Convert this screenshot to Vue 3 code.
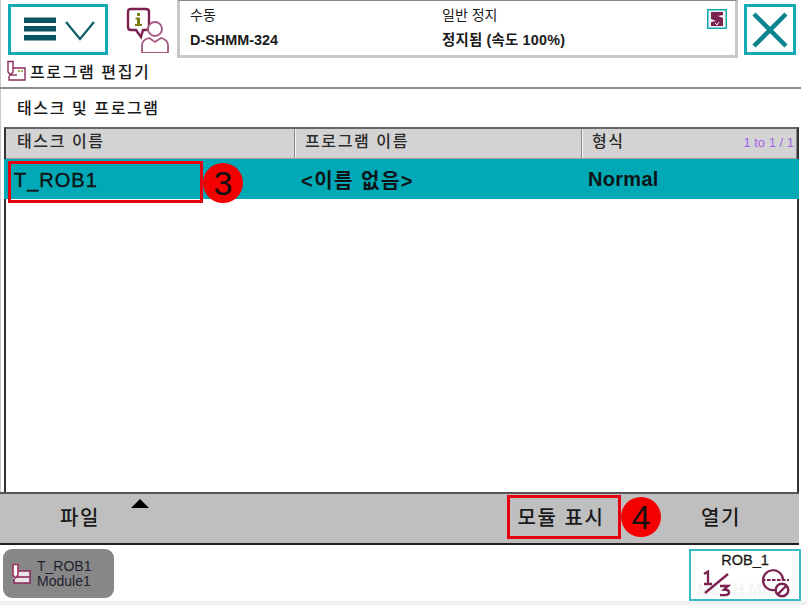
<template>
  <div class="screen">
    <header class="topbar">
      <button class="menu-btn">
        <svg width="71" height="30" viewBox="0 0 71 30">
          <rect x="0" y="2.500" width="32" height="5.500" fill="#0a5560" />
          <rect x="0" y="11" width="32" height="5.500" fill="#0a5560" />
          <rect x="0" y="20" width="32" height="5.500" fill="#0a5560" />
          <path d="M42 7 L56 24 L70 7" fill="none" stroke="#0e5f68" stroke-width="2.200" />
        </svg>
      </button>
      <svg class="info-icon" width="46" height="46" viewBox="0 0 46 46">
        <path d="M3 5 Q3 2 6 2 H21 Q24 2 24 5 V20 Q24 23 21 23 H18 L16 30 L11 23 H6 Q3 23 3 20 Z" fill="#fff" stroke="#7b2150" stroke-width="2.400" />
        <rect x="12" y="6" width="3" height="3" fill="#7d7d10" />
        <path d="M10.500 10.500 H15 V17 H17 V19 H10 V17 H12 V12.500 H10.500 Z" fill="#7d7d10" />
        <circle cx="30" cy="22" r="7" fill="#fff" stroke="#a5597f" stroke-width="1.800" />
        <path d="M17 46 V38 Q17 33 24 31 L30 35 L36 31 Q43 33 43 38 V46 Z" fill="#fff" stroke="#a5597f" stroke-width="1.800" />
      </svg>
      <div class="status">
        <div class="status-col first">
          <span>수동</span>
          <strong>D-SHMM-324</strong>
        </div>
        <div class="status-col second">
          <span>일반 정지</span>
          <strong>정지됨 (속도 100%)</strong>
        </div>
        <svg class="robot-icon" width="20" height="20" viewBox="0 0 20 20">
          <rect x="0.750" y="0.750" width="18.500" height="18.500" fill="#f4f4f4" stroke="#12aab5" stroke-width="1.500" />
          <path d="M4 3 H16 V6 L11 7 L16 9 V17 H4 V13 L9 12 L4 10 Z" fill="#7b2150" />
          <path d="M8 14 L10 16 L12 13" fill="none" stroke="#f4f4f4" stroke-width="1" />
        </svg>
      </div>
      <button class="close-btn">
        <svg width="38" height="38" viewBox="0 0 38 38">
          <path d="M3 3 L35 35 M35 3 L3 35" stroke="#0a858f" stroke-width="4.500" />
        </svg>
      </button>
    </header>

    <div class="title-row">
      <svg width="20" height="22" viewBox="0 0 20 22">
        <path d="M3 8 H19 V20 H3 V16" fill="none" stroke="#8b2d5c" stroke-width="1.400" />
        <path d="M3 15 H11" stroke="#8b2d5c" stroke-width="1.400" />
        <path d="M2 1.500 H7 V12 L4.500 15 L2 12 Z" fill="#fff" stroke="#8b2d5c" stroke-width="1.400" />
        <path d="M12 11 H17" stroke="#8c8c20" stroke-width="1.300" stroke-dasharray="2 1" />
      </svg>
      <span>프로그램 편집기</span>
    </div>

    <div class="section-title">태스크 및 프로그램</div>

    <section class="table">
      <div class="thead">
        <div class="th col-task">태스크 이름</div>
        <div class="th col-program">프로그램 이름</div>
        <div class="th col-type">
          <span>형식</span>
          <span class="count">1 to 1 / 1</span>
        </div>
      </div>
      <div class="row">
        <div class="col-task cell-task">
          T_ROB1
          <span class="red-box task-box"></span>
          <span class="badge task-badge">3</span>
        </div>
        <div class="col-program cell cell-name">&lt;이름 없음&gt;</div>
        <div class="col-type cell">Normal</div>
      </div>
    </section>

    <nav class="commands">
      <div class="cmd cmd-file">파일<i class="arrow"></i></div>
      <div class="cmd cmd-show">
        모듈 표시
        <span class="red-box show-box"></span>
        <span class="badge show-badge">4</span>
      </div>
      <div class="cmd cmd-open">열기</div>
    </nav>

    <footer class="footer">
      <div class="task-tab">
        <svg width="20" height="22" viewBox="0 0 20 22">
          <path d="M3 8 H19 V20 H3 V16" fill="#e9e4e8" stroke="#8b2d5c" stroke-width="1.600" />
          <path d="M3 14 H19" stroke="#8b2d5c" stroke-width="1.600" />
          <path d="M2 1.500 H7 V12 L4.500 15 L2 12 Z" fill="#fff" stroke="#a0305f" stroke-width="1.600" />
        </svg>
        <div class="task-tab-text">
          <span>T_ROB1</span>
          <span>Module1</span>
        </div>
      </div>
      <div class="rob-tab">
        <span class="watermark">MECH MIND</span>
        <span class="rob-name">ROB_1</span>
        <div class="rob-icons">
          <svg width="30" height="30" viewBox="0 0 30 30">
            <path d="M3 6 L7 3.500 V16 M3 16 H11" fill="none" stroke="#7b2150" stroke-width="2.300" />
            <path d="M4 25 L27 6" stroke="#7b2150" stroke-width="2.300" />
            <path d="M19 18 H27 L23 21.500 Q28 21.500 28 24.500 Q28 28 19 27" fill="none" stroke="#7b2150" stroke-width="2.300" />
          </svg>
          <svg width="32" height="30" viewBox="0 0 32 30">
            <path d="M17 22 A10 10 0 1 1 25 12" fill="none" stroke="#7b2150" stroke-width="2.200" />
            <path d="M4 12 H31" stroke="#7b2150" stroke-width="2.200" stroke-dasharray="3.500 1.500" />
            <circle cx="24" cy="22" r="6.300" fill="#fff" stroke="#7b2150" stroke-width="2.400" />
            <path d="M19.500 26.500 L28.500 17.500" stroke="#7b2150" stroke-width="2.400" />
          </svg>
        </div>
      </div>
    </footer>
  </div>
</template>

<script setup>
</script>

<style scoped>
.screen {
  width: 807px;
  height: 605px;
  display: flex;
  flex-direction: column;
  background: #fff;
  color: #1a1a1a;
  font-family: "Liberation Sans", "Noto Sans CJK KR", sans-serif;
  overflow: hidden;
  box-shadow: inset 1px 0 0 #c8c8c8;
}

.topbar {
  height: 58px;
  flex: none;
  display: flex;
  align-items: flex-start;
}

button {
  padding: 0;
  background: #fff;
  border: 3px solid #12aab5;
  display: flex;
  align-items: center;
  justify-content: center;
}

.menu-btn {
  width: 100px;
  height: 51px;
  margin: 4px 0 0 8px;
  padding-left: 3px;
}

.info-icon {
  margin: 7px 0 0 17px;
}

.status {
  width: 561px;
  height: 58px;
  margin-left: 6px;
  box-sizing: border-box;
  border: 3px solid #c8c8c8;
  border-top: 1px solid #888;
  padding: 5px 0 0 10px;
  display: flex;
  position: relative;
  font-size: 14px;
  line-height: 18px;
}

.status-col {
  display: flex;
  flex-direction: column;
  gap: 7px;
}

.status-col.first {
  width: 252px;
}

.status-col strong {
  font-size: 14.400px;
}

.status-col.second strong {
  letter-spacing: 0.200px;
}

.robot-icon {
  position: absolute;
  top: 8px;
  right: 8px;
}

.close-btn {
  width: 52px;
  height: 51px;
  margin: 4px 0 0 6px;
}

.title-row {
  width: 801px;
  height: 31px;
  flex: none;
  box-sizing: border-box;
  border-bottom: 2px solid #8c8c8c;
  padding: 0 0 3px 6px;
  display: flex;
  align-items: center;
  gap: 4px;
  font-size: 16px;
  font-weight: 500;
  letter-spacing: 1.600px;
}

.section-title {
  height: 38px;
  flex: none;
  box-sizing: border-box;
  padding: 10px 0 0 17px;
  font-size: 16px;
  line-height: 20px;
  font-weight: 500;
  letter-spacing: 1.600px;
}

.table {
  width: 795px;
  height: 365px;
  flex: none;
  margin-left: 4px;
  box-sizing: border-box;
  border: 2px solid #333;
  border-bottom: none;
  border-top-color: #666;
}

.thead {
  height: 30px;
  box-sizing: border-box;
  display: flex;
  background: #d3d3d3;
  font-size: 16px;
  font-weight: 500;
  letter-spacing: 1.600px;
  color: #2a2a2a;
  border-bottom: 1px solid #999;
}

.th {
  box-sizing: border-box;
  padding: 0 0 8px 9px;
  display: flex;
  align-items: center;
  border-right: 1px solid #f5f5f5;
  box-shadow: inset -1px 0 0 #888;
}

.thead .col-task {
  padding-left: 11px;
}

.col-task {
  width: 290px;
}

.col-program {
  width: 287px;
}

.col-type {
  flex: 1;
  min-width: 0;
}

.thead .col-type {
  border-right: none;
  justify-content: space-between;
  padding-right: 3px;
}

.count {
  font-size: 13px;
  font-weight: 400;
  letter-spacing: 0;
  color: #a55eea;
  padding-top: 5px;
}

.row {
  height: 40px;
  margin: 0 -2px;
  display: flex;
  align-items: center;
  background: #00a9b5;
  font-size: 20px;
  font-weight: 700;
  color: #0c1418;
}

.row .col-task {
  width: 292px;
}

.cell-task {
  position: relative;
  align-self: stretch;
  line-height: 42px;
  padding-left: 10px;
  box-sizing: border-box;
  font-weight: 400;
  -webkit-text-stroke: 0.4px #111;
  letter-spacing: 1px;
}

.cell {
  padding: 1px 0 0 5px;
  box-sizing: border-box;
  letter-spacing: 0.300px;
}

.cell-name {
  letter-spacing: 1.500px;
}

.red-box {
  position: absolute;
  box-sizing: border-box;
  border: 3px solid #e60012;
}

.badge {
  position: absolute;
  width: 40px;
  height: 40px;
  border-radius: 50%;
  background: #f50000;
  color: #111;
  font-size: 34px;
  font-weight: 400;
  line-height: 40px;
  text-align: center;
  letter-spacing: 0;
  -webkit-text-stroke: 0;
}

.task-box {
  left: 4px;
  top: 2px;
  width: 195px;
  height: 42px;
}

.task-badge {
  left: 199px;
  top: 4px;
}

.commands {
  height: 53px;
  width: 799px;
  flex: none;
  box-sizing: border-box;
  border-top: 2px solid #555;
  border-bottom: 2px solid #222;
  background: #bfbfbf;
  display: flex;
  font-size: 20px;
  line-height: 24px;
  font-weight: 500;
  letter-spacing: 1.600px;
}

.cmd {
  position: relative;
  flex: none;
  display: flex;
  align-items: center;
  justify-content: center;
  padding-bottom: 2px;
}

.cmd-file {
  width: 160px;
}

.arrow {
  position: absolute;
  left: 131px;
  top: 5px;
  border-left: 9px solid transparent;
  border-right: 9px solid transparent;
  border-bottom: 9px solid #000;
}

.cmd-show {
  width: 108px;
  margin-left: 347px;
}

.show-box {
  left: 0;
  top: 1px;
  width: 114px;
  height: 44px;
}

.show-badge {
  left: 114px;
  top: 3px;
}

.cmd-open {
  width: 150px;
  margin-left: 31px;
}

.footer {
  flex: 1;
  display: flex;
  justify-content: space-between;
  align-items: flex-start;
  padding: 4px 6px 0 3px;
  background: #fff;
  border-bottom: 4px solid #f0f0f0;
}

.task-tab {
  width: 111px;
  height: 49px;
  box-sizing: border-box;
  background: #878787;
  border-radius: 9px;
  padding-left: 8px;
  display: flex;
  align-items: center;
  gap: 6px;
}

.task-tab-text {
  display: flex;
  flex-direction: column;
  font-size: 14px;
  line-height: 15px;
  color: #1f1f2f;
}

.rob-tab {
  position: relative;
  width: 112px;
  height: 52px;
  box-sizing: border-box;
  border: 2px solid #35bcc4;
  display: flex;
  flex-direction: column;
  align-items: center;
}

.watermark {
  position: absolute;
  left: 6px;
  bottom: 0;
  font-size: 16px;
  line-height: 18px;
  font-weight: 700;
  white-space: nowrap;
  color: #f5f5f5;
}

.rob-name {
  position: relative;
  font-size: 14.500px;
  font-weight: 400;
  -webkit-text-stroke: 0.3px #111;
  line-height: 16px;
  padding-top: 1px;
  height: 16px;
}

.rob-icons {
  position: relative;
  width: 89px;
  margin-left: 1px;
  display: flex;
  justify-content: space-between;
}
</style>

<style>
html, body {
  background: #fff;
}
</style>
